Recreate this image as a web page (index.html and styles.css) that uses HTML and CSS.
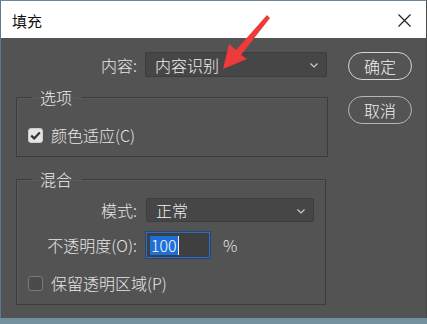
FILE: index.html
```html
<!DOCTYPE html>
<html>
<head>
<meta charset="utf-8">
<link rel="stylesheet" href="styles.css">
</head>
<body>
<div class="window">
  <div class="titlebar">
    <span class="title">填充</span>
    <svg class="close" width="13" height="13" viewBox="0 0 13 13"><path d="M0.5 0.5L12.5 12.5M12.5 0.5L0.5 12.5" stroke="#222" stroke-width="1.2" fill="none"/></svg>
  </div>
  <div class="content">
    <div class="main">
      <div class="row row-top">
        <label class="lbl lbl-top">内容:</label>
        <div class="select select-wide"><span>内容识别</span><svg class="chev" width="8" height="5" viewBox="0 0 8 5"><path d="M0.5 0.5L4 4L7.5 0.5" stroke="#cfcfcf" stroke-width="1.1" fill="none"/></svg></div>
      </div>
      <fieldset class="group group-1">
        <legend>选项</legend>
        <div class="check-row">
          <span class="cb cb-on"><svg width="11" height="9" viewBox="0 0 11 9"><path d="M1.2 4.6L4.2 7.4L9.8 1.5" stroke="#333" stroke-width="2.2" fill="none"/></svg></span>
          <span class="cb-text">颜色适应(C)</span>
        </div>
      </fieldset>
      <fieldset class="group group-2">
        <legend>混合</legend>
        <div class="row">
          <label class="lbl">模式:</label>
          <div class="select select-mode"><span>正常</span><svg class="chev" width="8" height="5" viewBox="0 0 8 5"><path d="M0.5 0.5L4 4L7.5 0.5" stroke="#cfcfcf" stroke-width="1.1" fill="none"/></svg></div>
        </div>
        <div class="row row-opacity">
          <label class="lbl">不透明度(O):</label>
          <div class="input"><span class="sel">100</span><span class="caret"></span></div>
          <span class="pct">%</span>
        </div>
        <div class="check-row check-row-2">
          <span class="cb cb-off"></span>
          <span class="cb-text">保留透明区域(P)</span>
        </div>
      </fieldset>
    </div>
    <div class="buttons">
      <button class="btn btn-default">确定</button>
      <button class="btn">取消</button>
    </div>
  </div>
  <svg class="arrow" width="427" height="324" viewBox="0 0 427 324"><polygon points="223,69 229,44 236,50 267,15 270,18 241,55 247,59" fill="#ee3a3a"/></svg>
</div>
</body>
</html>
```
FILE: styles.css
```css
html, body {
  margin: 0;
  padding: 0;
}
body {
  width: 427px;
  height: 324px;
  background: #7190a0;
  font-family: "Noto Sans CJK SC", "Microsoft YaHei", sans-serif;
  overflow: hidden;
}
.window {
  position: relative;
  width: 427px;
  height: 318px;
  background: #535353;
  box-sizing: border-box;
  border-left: 1px solid #5c7a8c;
  border-top: 1px solid #6d8697;
  border-right: 1px solid #4a4a4a;
}
.titlebar {
  height: 37px;
  background: #ffffff;
  display: flex;
  align-items: center;
  justify-content: space-between;
  padding: 0 15px 0 11px;
}
.title {
  font-size: 15px;
  color: #111;
  line-height: 20px;
  margin-top: 2px;
}
.close {
  display: block;
  margin-top: 1px;
}
.content {
  display: flex;
  color: #e6e6e6;
  font-size: 16px;
  font-weight: 300;
}
.main {
  width: 312px;
  padding: 14px 0 0 15px;
}
.row {
  display: flex;
  align-items: center;
}
.lbl {
  text-align: right;
  line-height: 20px;
  white-space: nowrap;
}
.lbl-top {
  width: 121px;
  margin-right: 8px;
}
.select {
  box-sizing: border-box;
  height: 25px;
  background: #464646;
  border: 1px solid #3d3d3d;
  border-radius: 2px;
  display: flex;
  align-items: center;
  justify-content: space-between;
  padding: 0 8px 0 9px;
  color: #f0f0f0;
  line-height: 20px;
}
.select-wide {
  width: 182px;
}
.chev {
  display: block;
  margin-top: 2px;
}
.group {
  margin: 0;
  border: 1px solid #3c3c3c;
  box-shadow: inset 1px 1px 0 #5a5a5a;
  padding: 0 11px;
  box-sizing: border-box;
}
.group legend {
  padding: 0 10px 0 8px;
  margin-left: 4px;
  line-height: 20px;
  color: #ececec;
}
.group-1 {
  width: 312px;
  margin-top: 10px;
  padding-top: 18px;
  padding-bottom: 11px;
}
.group-2 {
  width: 310px;
  margin-top: 12px;
  padding-top: 9px;
  padding-bottom: 11px;
}
.check-row {
  display: flex;
  align-items: center;
  height: 20px;
}
.cb {
  box-sizing: border-box;
  width: 15px;
  height: 15px;
  border-radius: 3px;
  display: flex;
  align-items: center;
  justify-content: center;
  margin-right: 8px;
  flex: none;
}
.cb-on {
  background: #e4e4e4;
  border: 1px solid #cfcfcf;
}
.cb-off {
  background: #4b4b4b;
  border: 1px solid #7a7a7a;
}
.cb-text {
  line-height: 20px;
}
.group-2 .lbl {
  width: 109px;
  margin-right: 9px;
}
.select-mode {
  width: 168px;
  height: 24px;
}
.row-opacity {
  margin-top: 10px;
}
.input {
  box-sizing: border-box;
  width: 64px;
  height: 26px;
  background: #3f3f3f;
  border: 1px solid #2f6cc0;
  box-shadow: 0 0 0 1px #24477a;
  display: flex;
  align-items: center;
  padding-left: 3px;
}
.sel {
  background: #1f6fd8;
  color: #ffffff;
  line-height: 19px;
  padding: 0 1px;
}
.caret {
  width: 1px;
  height: 19px;
  background: #f0f0f0;
}
.pct {
  margin-left: 13px;
  line-height: 20px;
  color: #e6e6e6;
}
.check-row-2 {
  margin-top: 15px;
}
.buttons {
  display: flex;
  flex-direction: column;
  gap: 16px;
  padding-top: 14px;
  margin-left: 20px;
}
.btn {
  box-sizing: border-box;
  width: 64px;
  height: 28px;
  border-radius: 14px;
  border: 1px solid #b5b5b5;
  background: #545454;
  color: #f0f0f0;
  font-family: "Noto Sans CJK SC", sans-serif;
  font-size: 16px;
  font-weight: 300;
  padding: 0;
  line-height: 20px;
}
.btn-default {
  border: 1.5px solid #d6d6d6;
}
.arrow {
  position: absolute;
  left: -1px;
  top: -1px;
  pointer-events: none;
}
```
